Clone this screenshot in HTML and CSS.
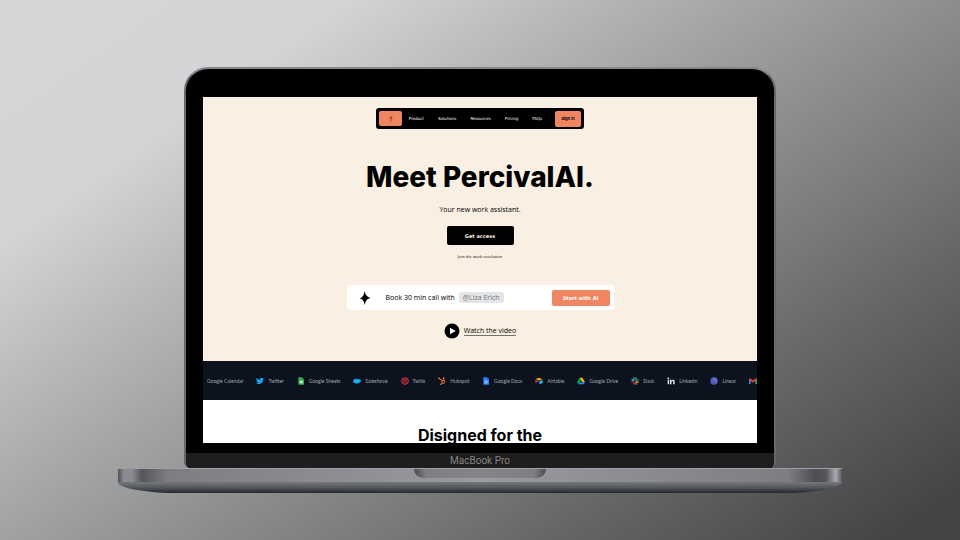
FILE: index.html
```html
<!DOCTYPE html>
<html lang="en">
<head>
<meta charset="utf-8">
<meta name="viewport" content="width=device-width, initial-scale=1">
<title>PercivalAI</title>
<link rel="stylesheet" href="styles.css">
</head>
<body>
<div class="laptop">
  <div class="lid">
    <div class="screen">
      <header class="hero">
        <nav class="nav">
          <a class="nav-logo" href="#top" aria-label="Home">
            <svg viewBox="0 0 8 8"><path d="M2.500 3 4 1.700 5.500 3M4 1.700V6.500" fill="none" stroke="#5c2c1c" stroke-width=".7"/></svg>
          </a>
          <div class="nav-links">
            <a href="#product">Product</a>
            <a href="#solutions">Solutions</a>
            <a href="#resources">Resources</a>
            <a href="#pricing">Pricing</a>
            <a href="#faqs">FAQs</a>
          </div>
          <button class="sign-in" type="button">Sign in</button>
        </nav>
        <h1>Meet PercivalAI.</h1>
        <p class="tagline">Your new work assistant.</p>
        <button class="access" type="button">Get access</button>
        <p class="note">Join the work revolution</p>
        <div class="prompt">
          <svg class="spark" viewBox="0 0 12 14"><path d="M5.600 0Q6.600 5.600 11.500 7 6.600 7.600 5.800 14 5 8.400 .5 7.300 5 6.200 5.600 0Z"/></svg>
          <span class="prompt-text">Book 30 min call with</span>
          <span class="mention">@Liza Erich</span>
          <button class="start" type="button">Start with AI</button>
        </div>
        <a class="watch" href="#video">
          <svg class="play" viewBox="0 0 16 16"><circle cx="8" cy="8" r="7.500"/><path d="M6 4.700v6.600L11.700 8Z" fill="#fff"/></svg>
          <span>Watch the video</span>
        </a>
      </header>
      <ul class="apps">
        <li>Google Calendar</li>
        <li><svg viewBox="0 0 24 24"><path fill="#1da1f2" d="M24 4.600a10 10 0 0 1-2.800.8 5 5 0 0 0 2.100-2.700 10 10 0 0 1-3.100 1.200 4.900 4.900 0 0 0-8.400 4.500A14 14 0 0 1 1.700 3.100a4.900 4.900 0 0 0 1.500 6.600 5 5 0 0 1-2.200-.6 4.900 4.900 0 0 0 3.900 4.900 5 5 0 0 1-2.200.1 4.900 4.900 0 0 0 4.600 3.400A10 10 0 0 1 0 19.500 14 14 0 0 0 21.500 7a10 10 0 0 0 2.500-2.400Z"/></svg>Twitter</li>
        <li><svg viewBox="0 0 24 24"><path fill="#34a853" d="M4 1h11l6 6v16H4Z"/><path fill="#188038" d="m15 1 6 6h-6Z"/><path fill="#fff" d="M8 11h9v8H8Zm1.500 1.500v1.700H12v-1.700Zm4 0v1.700h2v-1.700Zm-4 3.200v1.800H12v-1.800Zm4 0v1.800h2v-1.800Z"/></svg>Google Sheets</li>
        <li><svg viewBox="0 0 24 24"><path fill="#00a1e0" d="M10 6a5 5 0 0 1 6 1 5.500 5.500 0 1 1 3 10.500 5 5 0 0 1-5 1 5 5 0 0 1-8-1 4.500 4.500 0 0 1-4-8A5 5 0 0 1 10 6Z"/><path d="M6 12.500h12" stroke="#bfe9fa" stroke-width="1.500"/></svg>Salesforce</li>
        <li><svg viewBox="0 0 24 24"><circle cx="12" cy="12" r="10" fill="none" stroke="#f22f46" stroke-width="3"/><g fill="#f22f46"><circle cx="8.800" cy="8.800" r="2.500"/><circle cx="15.200" cy="8.800" r="2.500"/><circle cx="8.800" cy="15.200" r="2.500"/><circle cx="15.200" cy="15.200" r="2.500"/></g></svg>Twilio</li>
        <li><svg viewBox="0 0 24 24"><g fill="none" stroke="#ff7a30" stroke-width="3"><circle cx="16" cy="14.500" r="4.500"/><path d="M3 4 13 11.500M17 10V4M13 18l-4 4"/></g><g fill="#ff7a30"><circle cx="3" cy="4" r="2.700"/><circle cx="17" cy="3.500" r="2.500"/><circle cx="9" cy="21.500" r="2.200"/></g></svg>Hubspot</li>
        <li><svg viewBox="0 0 24 24"><path fill="#2684fc" d="M4 1h11l6 6v16H4Z"/><path fill="#0066da" d="m15 1 6 6h-6Z"/><path d="M8 12.500h9M8 15.500h9M8 18.500h6" stroke="#fff" stroke-width="1.500"/></svg>Google Docs</li>
        <li><svg viewBox="0 0 24 24"><path fill="#fcb400" d="m2 6.500 10-4 10 4-10 4Z"/><path fill="#18bfff" d="m13 13 10-4v9l-10 4Z"/><path fill="#f82b60" d="M1 9l10 4-10 5Z"/></svg>Airtable</li>
        <li><svg viewBox="0 0 24 24"><path fill="#00ac47" d="M8 2 0 16l4 6 8-13Z"/><path fill="#ffba00" d="M8 2h8l8 14h-8Z"/><path fill="#2684fc" d="M8 16h16l-4 6H4Z"/></svg>Google Drive</li>
        <li><svg viewBox="0 0 24 24"><g fill="none" stroke-width="4.200" stroke-linecap="round"><path stroke="#36c5f0" d="M3 9h6M9 3v1"/><path stroke="#2eb67d" d="M15 3v6M21 9h-1"/><path stroke="#ecb22e" d="M15 15h6M15 20v1"/><path stroke="#e01e5a" d="M9 15v6M3 15h1"/></g></svg>Slack</li>
        <li><svg viewBox="0 0 24 24" fill="#e4e4e4"><circle cx="4" cy="4" r="2.800"/><path d="M2 8.500h4.500V22H2ZM9 8.500h4.300v2c2.500-3.800 9.700-3 9.700 3.500v8h-4.500v-7.500c0-3.500-5-3.500-5 0V22H9Z"/></svg>Linkedin</li>
        <li><svg viewBox="0 0 24 24"><circle cx="12" cy="12" r="11" fill="#5e6ad2"/><path d="m1 10 13 13M2 6l16 15" stroke="#27306d" stroke-width="1.500"/></svg>Linear</li>
        <li><svg viewBox="0 0 24 24"><path fill="#4285f4" d="M0 5h5v16H0Z"/><path fill="#34a853" d="M19 5h5v16h-5Z"/><path fill="none" stroke="#ea4335" stroke-width="5" d="m2 6 10 8 10-8"/></svg></li>
      </ul>
      <section class="next"><h2>Disigned for the</h2></section>
    </div>
    <div class="chin">MacBook Pro</div>
  </div>
  <div class="base"><div class="notch"></div></div>
  <div class="underside"></div>
</div>
</body>
</html>
```
FILE: styles.css
```css
* { box-sizing: border-box; }

body {
  margin: 0;
  min-height: 100vh;
  padding: 67px 16px 0;
  font-family: "Open Sans", "Liberation Sans", sans-serif;
  color: #000;
  background: linear-gradient(145deg, #d4d6d8 0%, #d3d4d6 20%, #9fa2a0 45%, #666 76%, #444 96%);
}

h1, h2, p, ul { margin: 0; padding: 0; }
a { color: inherit; text-decoration: none; }
button { border: 0; padding: 0; font-family: "DejaVu Sans", sans-serif; font-weight: 700; }

.laptop { max-width: 724px; margin: 0 auto; }

.lid {
  margin: 0 66px;
  padding-top: 28px;
  border: 2px solid #67686c;
  border-top-color: #85868a;
  border-bottom: 0;
  border-radius: 24px 24px 6px 6px;
  background: #000;
  overflow: hidden;
}

.screen {
  margin: 0 17px;
  height: 346px;
  background: #fff;
  overflow: hidden;
}

.hero {
  display: flex;
  flex-direction: column;
  align-items: center;
  height: 264px;
  padding-top: 11px;
  background: #faefe3;
}

.nav {
  display: flex;
  align-items: center;
  justify-content: space-between;
  width: 208px;
  height: 21px;
  padding: 0 3px;
  border-radius: 3px;
  background: #000;
  color: #fff;
  font: 4px "DejaVu Sans", sans-serif;
}
.nav-logo {
  display: grid;
  place-items: center;
  width: 23px;
  height: 15px;
  border-radius: 2px;
  background: #f08562;
}
.nav-logo svg { width: 8px; }
.nav-links { display: flex; gap: 14px; margin-right: 6px; }
.sign-in {
  width: 26px;
  height: 16px;
  border-radius: 2px;
  background: #f08562;
  font-family: Inter, sans-serif;
  font-size: 4px;
}

h1 {
  margin-top: 31px;
  font: 800 28px/34px Inter, sans-serif;
}
.tagline { margin-top: 10px; font-size: 7px; line-height: 12px; }
.access {
  width: 67px;
  height: 19px;
  margin-top: 10px;
  border-radius: 2px;
  background: #000;
  color: #faefe3;
  font-size: 5px;
}
.note { margin-top: 9px; font-size: 4px; line-height: 6px; }

.prompt {
  display: flex;
  align-items: center;
  width: 267px;
  height: 25px;
  margin-top: 25px;
  padding: 0 4px 0 12px;
  border-radius: 4px;
  background: #fff;
  font-size: 7px;
}
.spark { width: 12px; height: 14px; margin-right: 15px; }
.mention {
  margin-left: 4px;
  padding: 0 4px;
  border-radius: 3px;
  background: #e4e5e7;
  color: #6f7378;
  line-height: 11px;
}
.start {
  width: 58px;
  height: 16px;
  margin-left: auto;
  border-radius: 2px;
  background: #f08562;
  color: #fff;
  font-size: 5px;
}

.watch {
  display: flex;
  align-items: center;
  gap: 4px;
  margin-top: 13px;
  font-size: 7px;
}
.watch span { border-bottom: 1px solid #77716b; line-height: 9px; }
.play { width: 16px; height: 16px; }

.apps {
  display: flex;
  align-items: center;
  justify-content: space-between;
  height: 39px;
  padding-left: 4px;
  background: #0c131f;
  color: #a5a8ad;
  font: 5px Lato, sans-serif;
  list-style: none;
  white-space: nowrap;
}
.apps li { display: flex; flex: none; align-items: center; gap: 4px; }
.apps svg { width: 8px; height: 8px; }

.next { padding-top: 25px; text-align: center; }
.next h2 { font: 700 16px/20px Inter, sans-serif; }

.chin {
  height: 15px;
  margin-top: 10px;
  background: #1e1e1e;
  color: #858585;
  font: 10px/16px Roboto, sans-serif;
  text-align: center;
}

.base {
  height: 14px;
  border-top: 1px solid #a0a1a5;
  background: linear-gradient(90deg, #4e4f54 0, #8b8c91 6px, #8b8c91 14px, #55565a 24px, #7d7d82 50px, #9a9ba0 50%, #7d7d82 calc(100% - 54px), #4d4e53 calc(100% - 26px), #55565a calc(100% - 16px), #aaabb0 calc(100% - 6px), #55565b 100%);
}
.notch {
  width: 132px;
  height: 9px;
  margin: 0 auto;
  border-radius: 0 0 9px 9px;
  background: linear-gradient(90deg, #4c4c50, #7f7f82 12px, #858588 50%, #7f7f82 calc(100% - 12px), #4c4c50);
}
.underside {
  height: 11px;
  border-radius: 0 0 60px 60px / 0 0 11px 11px;
  background: linear-gradient(#77787c, #54575b 50%, #25282c);
}
```
